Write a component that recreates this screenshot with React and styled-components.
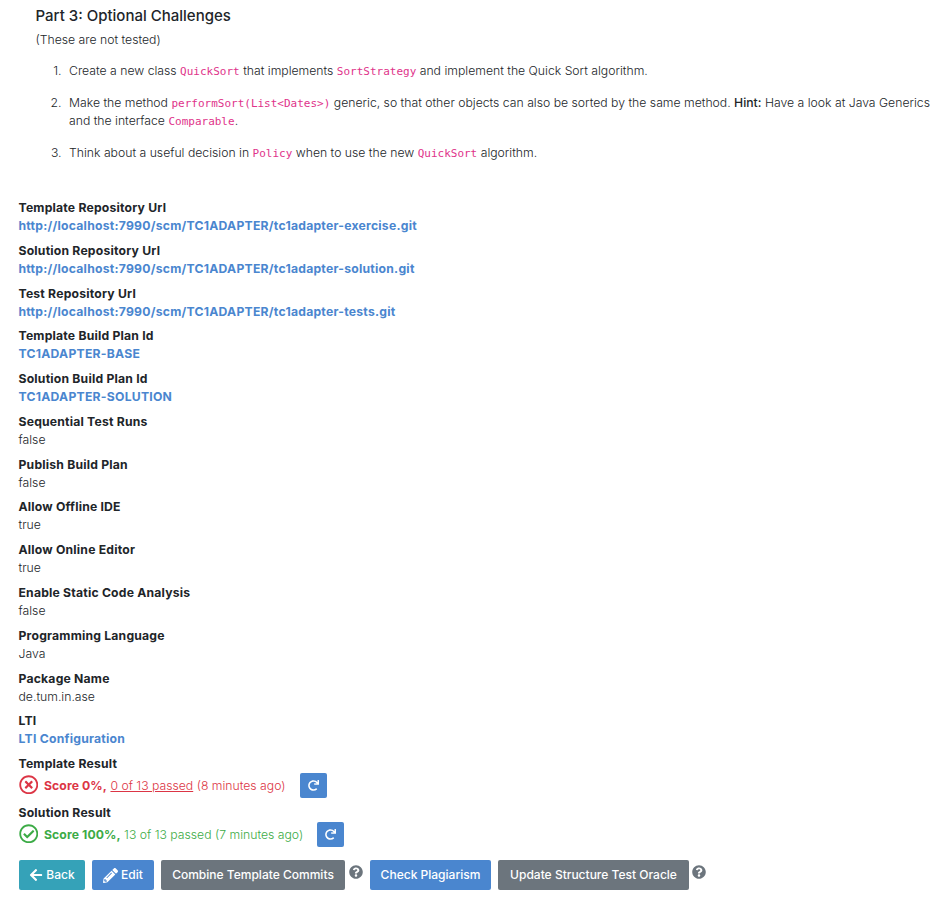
import React from 'react';
import styled, { createGlobalStyle } from 'styled-components';
import { FaArrowLeft, FaPencilAlt, FaQuestionCircle, FaRedo, FaRegCheckCircle, FaRegTimesCircle } from 'react-icons/fa';

const GlobalStyle = createGlobalStyle`
  * { box-sizing: border-box; }
  html, body { margin: 0; background: #fff; }
  body { overflow: hidden; }
`;

const Page = styled.main`
  height: 900px;
  overflow: hidden;
  font: 350 12.22px/18px Inter, sans-serif;
  color: #212529;
`;

const Instructions = styled.section`
  height: 199px;
  padding: 6px 0 0 35.5px;
`;

const Heading = styled.h4`
  margin: 0 0 6px;
  font-size: 15px;
  line-height: 19px;
  font-weight: 500;
`;

const Note = styled.p`
  margin: 0 0 13px;
`;

const Tasks = styled.ol`
  margin: 0;
  padding: 0;
  list-style: none;
  counter-reset: task;
`;

const Task = styled.li`
  display: grid;
  grid-template-columns: 26px 1fr;
  column-gap: 7.5px;
  margin-bottom: 14px;
  white-space: nowrap;
  counter-increment: task;
  &::before {
    content: counter(task) '.';
    text-align: right;
  }
`;

const Code = styled.code`
  font: 11px/1 "DejaVu Sans Mono", monospace;
  color: #e0338a;
`;

const Hint = styled.span`
  font-weight: 450;
`;

const Details = styled.dl`
  margin: 0;
  padding-left: 18.5px;
`;

const Term = styled.dt`
  height: 18px;
  font-size: 12.2px;
  font-weight: 700;
  letter-spacing: 0.2px;
`;

const Value = styled.dd`
  height: 18px;
  margin: 0 0 6.79px;
`;

const Link = styled.a`
  color: #4a86cf;
  font-size: 12.2px;
  font-weight: 700;
  letter-spacing: 0.24px;
  text-decoration: none;
`;

const Result = styled.dd`
  display: flex;
  align-items: center;
  height: 25px;
  margin: 0 0 6px;
  color: ${({ $passed }) => ($passed ? '#3cab46' : '#dc3545')};
  > svg {
    flex: none;
    margin-top: -2px;
  }
`;

const ResultText = styled.span`
  margin: 1px 14px 0 6px;
  white-space: nowrap;
  b {
    font-size: 12.2px;
    letter-spacing: 0.1px;
  }
`;

const RetryButton = styled.button`
  display: grid;
  place-items: center;
  width: 27px;
  height: 25px;
  padding: 0;
  border: 0;
  border-radius: 2px;
  color: #fff;
  background: #4a86cf;
`;

const Actions = styled.footer`
  display: flex;
  align-items: flex-start;
  margin-top: 13px;
  padding-left: 19px;
`;

const Button = styled.button`
  display: flex;
  align-items: center;
  justify-content: center;
  gap: 3px;
  width: ${({ $width }) => $width}px;
  height: 30px;
  margin-right: ${({ $after }) => $after || 7}px;
  padding: 0;
  border: 0;
  border-radius: 2px;
  background: ${({ $color }) => $color};
  color: #fff;
  font: 500 12.03px/18px Inter, sans-serif;
  white-space: nowrap;
`;

const Help = styled.span`
  display: flex;
  margin: 5px 7px 0 0;
  color: #6c757d;
`;

const details = [
  ['Template Repository Url', 'http://localhost:7990/scm/TC1ADAPTER/tc1adapter-exercise.git', true],
  ['Solution Repository Url', 'http://localhost:7990/scm/TC1ADAPTER/tc1adapter-solution.git', true],
  ['Test Repository Url', 'http://localhost:7990/scm/TC1ADAPTER/tc1adapter-tests.git', true],
  ['Template Build Plan Id', 'TC1ADAPTER-BASE', true],
  ['Solution Build Plan Id', 'TC1ADAPTER-SOLUTION', true],
  ['Sequential Test Runs', 'false'],
  ['Publish Build Plan', 'false'],
  ['Allow Offline IDE', 'true'],
  ['Allow Online Editor', 'true'],
  ['Enable Static Code Analysis', 'false'],
  ['Programming Language', 'Java'],
  ['Package Name', 'de.tum.in.ase'],
  ['LTI', 'LTI Configuration', true],
];

export default function App() {
  return (
    <Page>
      <GlobalStyle />
      <Instructions>
        <Heading>Part 3: Optional Challenges</Heading>
        <Note>(These are not tested)</Note>
        <Tasks>
          <Task><span>Create a new class <Code>QuickSort</Code> that implements <Code>SortStrategy</Code> and implement the Quick Sort algorithm.</span></Task>
          <Task><span>Make the method <Code>performSort(List&lt;Dates&gt;)</Code> generic, so that other objects can also be sorted by the same method. <Hint>Hint:</Hint> Have a look at Java Generics<br />and the interface <Code>Comparable</Code>.</span></Task>
          <Task><span>Think about a useful decision in <Code>Policy</Code> when to use the new <Code>QuickSort</Code> algorithm.</span></Task>
        </Tasks>
      </Instructions>
      <Details>
        {details.map(([label, value, link]) => (
          <React.Fragment key={label}>
            <Term>{label}</Term>
            <Value>{link ? <Link>{value}</Link> : value}</Value>
          </React.Fragment>
        ))}
        <Term>Template Result</Term>
        <Result>
          <FaRegTimesCircle size={19.5} />
          <ResultText><b>Score 0%,</b> <u>0 of 13 passed</u> (8 minutes ago)</ResultText>
          <RetryButton aria-label="Retry template"><FaRedo size={11} /></RetryButton>
        </Result>
        <Term>Solution Result</Term>
        <Result $passed>
          <FaRegCheckCircle size={19.5} />
          <ResultText><b>Score 100%,</b> 13 of 13 passed (7 minutes ago)</ResultText>
          <RetryButton aria-label="Retry solution"><FaRedo size={11} /></RetryButton>
        </Result>
      </Details>
      <Actions>
        <Button $width={66} $color="#35a2b8"><FaArrowLeft size={14} />Back</Button>
        <Button $width={62} $color="#4a86cf"><FaPencilAlt size={15} />Edit</Button>
        <Button $width={184} $color="#6c757d" $after={4}>Combine Template Commits</Button>
        <Help><FaQuestionCircle size={14} /></Help>
        <Button $width={121} $color="#4a86cf">Check Plagiarism</Button>
        <Button $width={191} $color="#6c757d" $after={3}>Update Structure Test Oracle</Button>
        <Help><FaQuestionCircle size={14} /></Help>
      </Actions>
    </Page>
  );
}
